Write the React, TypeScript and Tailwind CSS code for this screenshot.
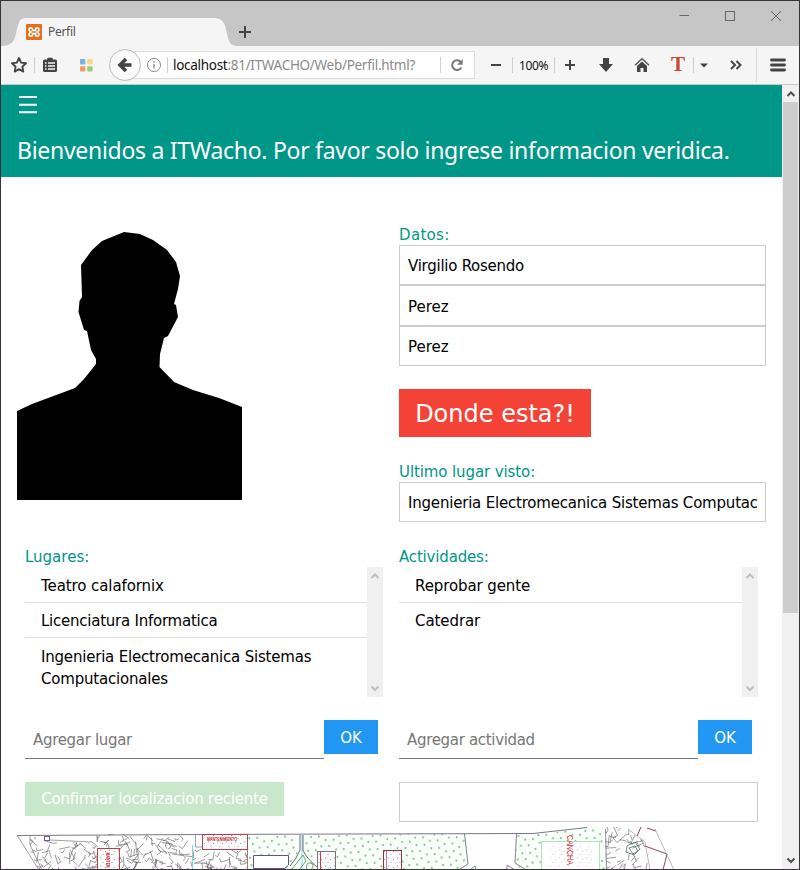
import type { ReactNode } from 'react';

const VERDANA = "font-['DejaVu_Sans',Verdana,sans-serif]";
const SEGOE = "font-['Noto_Sans','Segoe_UI',sans-serif]";

function Sep() {
  return <span className="h-4 w-px shrink-0 bg-[#cfcfcf]" />;
}

function Slot({ className, children }: { className: string; children: ReactNode }) {
  return <span className={`flex shrink-0 items-center justify-center ${className}`}>{children}</span>;
}

function TitleBar() {
  return (
    <div className="flex h-[45px] shrink-0 items-end bg-[#c6c6c6]">
      <svg width="25" height="28" viewBox="0 0 25 28" className="shrink-0">
        <path d="M0 28C10 28 13 24 15 16C17 6 18 0 25 0V28Z" fill="#f5f5f5" />
      </svg>
      <div className="flex h-7 w-[187px] items-center bg-[#f5f5f5]">
        <svg width="16" height="16" viewBox="0 0 16 16">
          <rect width="16" height="16" rx="1" fill="#e3701e" />
          <path d="M6.600 5.300Q6.200 3.700 4.600 3.700Q3 3.800 3 5.400Q3 6.600 4 7.200L5 8L4 8.800Q3 9.400 3 10.600Q3 12.200 4.600 12.300Q6.200 12.300 6.600 10.700V9.500H9.400V10.700Q9.800 12.300 11.400 12.300Q13 12.200 13 10.600Q13 9.400 12 8.800L11 8L12 7.200Q13 6.600 13 5.400Q13 3.800 11.400 3.700Q9.800 3.700 9.400 5.300V6.500H6.600Z" fill="none" stroke="#fff" strokeWidth="1.600" />
        </svg>
        <span className={`ml-[6px] text-[12px] tracking-[-0.300px] text-[#555] ${SEGOE}`}>Perfil</span>
      </div>
      <svg width="25" height="28" viewBox="0 0 25 28" className="shrink-0">
        <path d="M25 28C17 28 16 24 14 16C12 6 11 0 0 0V28Z" fill="#f5f5f5" />
      </svg>
      <svg width="17" height="28" viewBox="3 0 17 28" className="shrink-0">
        <path d="M4 14H16M10 8V20" stroke="#444" strokeWidth="2" />
      </svg>
      <svg width="120" height="45" viewBox="0 0 120 45" className="ml-auto shrink-0" fill="none" stroke="#666">
        <path d="M0.5 14.5H10" />
        <rect x="46.500" y="10.500" width="9" height="9" />
        <path d="M92 10L102 20M102 10L92 20" />
      </svg>
    </div>
  );
}

function ToolBar() {
  return (
    <div className="flex h-[39px] shrink-0 items-center border-b border-[#c9c9c9] bg-[#f5f5f5]">
      <Slot className="ml-[3px] w-[30px]">
        <svg width="18" height="18" viewBox="0 0 18 18">
          <path d="M9 2L11.1 6.6L16 7.2L12.4 10.6L13.3 15.6L9 13.2L4.7 15.6L5.6 10.6L2 7.2L6.9 6.6Z" fill="none" stroke="#444" strokeWidth="1.9" strokeLinejoin="round" />
        </svg>
      </Slot>
      <Sep />
      <Slot className="w-[30px]">
        <svg width="16" height="16" viewBox="0 0 16 16">
          <path d="M5.2 2.5V1.8Q5.2 0.8 6.2 0.8H9.8Q10.8 0.8 10.8 1.8V2.5H13.500Q15 2.5 15 4V13.500Q15 15 13.500 15H2.500Q1 15 1 13.500V4Q1 2.5 2.500 2.5Z" fill="#444" />
          <path d="M3 6H4.5M6 6H13M3 9H4.5M6 9H13M3 12H4.5M6 12H13" stroke="#f5f5f5" strokeWidth="1.5" />
        </svg>
      </Slot>
      <Slot className="w-[42px]">
        <svg width="13" height="13" viewBox="0 0 13 13">
          <rect width="5.4" height="5.4" rx="1" fill="#7ab3e3" />
          <rect x="7.2" width="5.4" height="5.4" rx="1" fill="#f6d980" />
          <rect y="7.2" width="5.4" height="5.4" rx="1" fill="#ef9f65" />
          <rect x="7.2" y="7.2" width="5.4" height="5.4" rx="1" fill="#98cd7c" />
        </svg>
      </Slot>
      <span className="z-10 ml-[2px] -mr-4 flex h-8 w-8 shrink-0 items-center justify-center rounded-full border border-[#bdbdbd] bg-[#fafafa]">
        <svg width="16" height="16" viewBox="0 0 16 16">
          <path d="M9 2L3 8L9 14M3.5 8H14.5" fill="none" stroke="#444" strokeWidth="3.6" />
        </svg>
      </span>
      <div className="flex h-7 w-[350px] shrink-0 items-center border border-[#dcdcdc] bg-white pl-5">
        <svg width="16" height="16" viewBox="0 0 16 16" className="shrink-0">
          <circle cx="8" cy="8" r="6.5" fill="none" stroke="#8a8a8a" />
          <path d="M8 7V11.5M8 4.3V5.7" stroke="#8a8a8a" strokeWidth="1.4" />
        </svg>
        <span className="ml-[5px]" />
        <Sep />
        <span className={`w-[272px] shrink-0 overflow-hidden pt-px pl-[5px] text-[13.500px] tracking-[-0.290px] whitespace-nowrap text-[#8b8b8b] ${SEGOE}`}>
          <span className="text-[#111]">localhost</span>:81/ITWACHO/Web/Perfil.html?
        </span>
        <Sep />
        <Slot className="w-[32px]">
          <svg width="14" height="14" viewBox="0 0 14 14">
            <path d="M11.3 9.6A4.9 4.9 0 1 1 10.6 3.7" fill="none" stroke="#777" strokeWidth="2" />
            <path d="M12.7 1V6.8H7Z" fill="#777" />
          </svg>
        </Slot>
      </div>
      <Slot className="ml-[5px] w-[32px]">
        <svg width="12" height="12" viewBox="0 0 12 12"><path d="M1 6H11" stroke="#444" strokeWidth="2" /></svg>
      </Slot>
      <Sep />
      <Slot className={`w-[41px] pt-px text-[12px] tracking-[-0.4px] text-[#111] ${SEGOE}`}>100%</Slot>
      <Sep />
      <Slot className="w-[30px]">
        <svg width="12" height="12" viewBox="0 0 12 12"><path d="M1 6H11M6 1V11" stroke="#444" strokeWidth="2" /></svg>
      </Slot>
      <Slot className="ml-[3px] w-9">
        <svg width="16" height="16" viewBox="0 0 16 16"><path d="M5 1H11V7H15L8 15L1 7H5Z" fill="#444" /></svg>
      </Slot>
      <Slot className="w-9">
        <svg width="16" height="16" viewBox="0 0 16 16">
          <path d="M1 8.3L8 1.8L15 8.3" fill="none" stroke="#555" strokeWidth="1.4" />
          <path d="M3 9L8 4.4L13 9V15H9.5V11H6.5V15H3Z" fill="#444" />
        </svg>
      </Slot>
      <Slot className="ml-[3px] w-[30px] font-['Liberation_Serif',serif] text-[21px] font-bold text-[#c8473c]">T</Slot>
      <Sep />
      <Slot className="w-5">
        <svg width="8" height="5" viewBox="0 0 8 5"><path d="M0 0.5H8L4 4.5Z" fill="#444" /></svg>
      </Slot>
      <Slot className="ml-[2px] w-10">
        <svg width="12" height="10" viewBox="0 0 12 10"><path d="M1 1L5 5L1 9M6.5 1L10.5 5L6.5 9" fill="none" stroke="#444" strokeWidth="2" /></svg>
      </Slot>
      <span className="h-[34px] w-px shrink-0 bg-[#dadada]" />
      <Slot className="w-[42px]">
        <svg width="16" height="14" viewBox="0 0 16 14"><path d="M1.5 2H14.5M1.5 7H14.5M1.5 12H14.5" stroke="#444" strokeWidth="2.8" strokeLinecap="round" /></svg>
      </Slot>
    </div>
  );
}

function Arrow({ up, color }: { up?: boolean; color: string }) {
  return (
    <svg width="16" height="17" viewBox="0 0 16 17" className="shrink-0">
      <path d={up ? 'M4.500 11L8 7.500L11.500 11' : 'M4.500 6.500L8 10L11.500 6.500'} fill="none" stroke={color} strokeWidth="2" />
    </svg>
  );
}

type Item = { text: string; className: string };

function ScrollList({ items, className }: { items: Item[]; className: string }) {
  return (
    <div className={`flex h-[130px] ${className}`}>
      <ul className="flex-1 overflow-hidden">
        {items.map((item) => (
          <li key={item.text} className={`px-4 leading-[22px] ${item.className}`}>
            {item.text}
          </li>
        ))}
      </ul>
      <div className="flex w-4 flex-col justify-between bg-[#f0f0f0]">
        <Arrow up color="#bfbfbf" />
        <Arrow color="#bfbfbf" />
      </div>
    </div>
  );
}

const PLACES: Item[] = [
  { text: 'Teatro calafornix', className: 'h-9 pt-2 border-b border-[#ddd] tracking-[-0.090px]' },
  { text: 'Licenciatura Informatica', className: 'h-[35px] pt-[7px] border-b border-[#ddd] tracking-[-0.240px]' },
  { text: 'Ingenieria Electromecanica Sistemas Computacionales', className: 'h-[57px] pt-2 tracking-[-0.200px]' },
];

const ACTIVITIES: Item[] = [
  { text: 'Reprobar gente', className: 'h-9 pt-2 border-b border-[#ddd] tracking-[-0.100px]' },
  { text: 'Catedrar', className: 'h-[35px] pt-[7px] tracking-[-0.080px]' },
];

const DATA = [
  { text: 'Virgilio Rosendo', className: 'h-10 pt-[9px] tracking-[-0.260px]' },
  { text: 'Perez', className: 'h-[41px] pt-[10px]' },
  { text: 'Perez', className: 'h-10 pt-[9px]' },
];

function Label({ children, className }: { children: ReactNode; className: string }) {
  return <div className={`h-[22px] leading-[22px] whitespace-nowrap text-[#009688] ${className}`}>{children}</div>;
}

function AddField({ text, className }: { text: string; className: string }) {
  return (
    <div className={`flex items-start ${className}`}>
      <div className="h-[39px] w-[299px] border-b border-[#757575] pt-[9px] pl-2 leading-[22px] tracking-[-0.320px] text-[#777]">{text}</div>
      <button className="h-[34px] w-[54px] bg-[#2196f3] pt-[2px] text-[15px] text-white">OK</button>
    </div>
  );
}

function randomizer(seed: number) {
  let s = seed;
  return () => {
    s = (s * 16807) % 2147483647;
    return s / 2147483647;
  };
}

function hatch(x0: number, x1: number, y0: number, count: number, seed: number) {
  const r = randomizer(seed);
  let d = '';
  for (let i = 0; i < count; i++) {
    const x = x0 + r() * (x1 - x0);
    const y = y0 + r() * (872 - y0);
    const a = r() * Math.PI;
    const l = 4 + r() * 8;
    const dx = Math.cos(a) * l;
    const dy = Math.sin(a) * l;
    d += `M${x.toFixed(1)} ${y.toFixed(1)}l${dx.toFixed(1)} ${dy.toFixed(1)}`;
    if (r() > 0.6) d += `l${(-dy * 0.5).toFixed(1)} ${(dx * 0.5).toFixed(1)}`;
  }
  return d;
}

function CampusMap() {
  return (
    <svg width="765" height="42" viewBox="17 827 765 42" className="mt-[5px] ml-4 shrink-0" fill="none">
      <defs>
        <pattern id="grass" width="15" height="14" patternUnits="userSpaceOnUse" patternTransform="rotate(12)">
          <rect width="15" height="14" fill="#fafffa" />
          <path d="M2 3h1.6M9.5 5h1.6M5 10h1.6M12.5 12h1.6" stroke="#3fae55" strokeWidth="1.6" />
        </pattern>
        <pattern id="speck" width="9" height="8" patternUnits="userSpaceOnUse">
          <rect width="9" height="8" fill="#fff" />
          <path d="M1 2h1.2M6 3.500h1M3.500 6.500h1" stroke="#999" />
        </pattern>
        <clipPath id="west"><path d="M30 836L32 836L50 841L90 843L97 847H120V870H38L30 850ZM97 834H192V870H120V847H97Z" /></clipPath>
        <clipPath id="mid"><path d="M193 849H247V870H193Z" /></clipPath>
        <clipPath id="east"><path d="M605 827H625L645 842L650 870H606Z" /></clipPath>
      </defs>
      <path d={hatch(28, 192, 833, 185, 77)} clipPath="url(#west)" stroke="#666" strokeWidth="0.65" />
      <path d={hatch(192, 248, 847, 42, 31)} clipPath="url(#mid)" stroke="#666" strokeWidth="0.65" />
      <path d={hatch(602, 650, 825, 62, 19)} clipPath="url(#east)" stroke="#666" strokeWidth="0.65" />
      <path d="M248 835H299V850L290 869H248Z" fill="url(#grass)" />
      <path d="M304 835L465 834L468 864L460 870H318L306 857Z" fill="url(#grass)" />
      <path d="M517 834H540L587 828H602L606 870H522L515 863Z" fill="url(#grass)" />
      <path d="M17 835.500L200 834.500L345 834L533 833.500L587 827.500" stroke="#6b6875" strokeWidth="0.9" />
      <path d="M17 835L39 870M30 836L30 845L42 870M97 835V842M50 840L92 842L98 847" stroke="#777" strokeWidth="0.7" />
      <rect x="44.500" y="836.500" width="5" height="4" fill="#fff" stroke="#77519a" />
      <path d="M192.500 845V870M302 834V870" stroke="#72dce0" strokeWidth="1" />
      <path d="M195.500 835V847H202" stroke="#777" strokeWidth="0.7" />
      <rect x="97.500" y="848.500" width="22" height="24" fill="url(#speck)" stroke="#c53c48" />
      <text transform="translate(105.500 852.500) rotate(90)" fill="#c9232d" fontSize="4.500" fontWeight="bold" fontFamily="Liberation Sans" textLength="15" lengthAdjust="spacingAndGlyphs">MANTEN</text>
      <rect x="202.500" y="834.500" width="45" height="15" fill="url(#speck)" stroke="#c53c48" />
      <text x="207" y="841" fill="#c9232d" fontSize="4.500" fontWeight="bold" fontFamily="Liberation Sans" textLength="30" lengthAdjust="spacingAndGlyphs">MANTENIMIENTO</text>
      <path d="M247.500 835V870" stroke="#8e5560" strokeWidth="0.8" />
      <path d="M253.500 855.500H288.500V865L284.500 868.500H253.500Z" fill="#fff" stroke="#655080" />
      <path d="M300 835V850Q297 858 290 866M303 835V850Q306 858 318 868" stroke="#6b6875" />
      <path d="M292 869L303 855L306 861L299 870M307 870Q305 862 311 863Q315 865 311 870" stroke="#4eae58" />
      <rect x="317.500" y="851.500" width="18" height="20" fill="url(#speck)" stroke="#777" />
      <path d="M320.500 852V870" stroke="#c53c48" />
      <rect x="383.500" y="850.500" width="18" height="21" fill="url(#speck)" stroke="#8e3540" />
      <path d="M386.500 851V870" stroke="#b36" strokeWidth="0.7" />
      <path d="M464.500 834L468 864L460 869M516.500 834L515 863L525 869M470 870L475 866L476 870M507 870V865L515 870" stroke="#5b6a68" strokeWidth="0.8" />
      <rect x="541.500" y="841.500" width="58" height="30" fill="#fff" stroke="#a9e8c5" />
      <rect x="550" y="845" width="45" height="22" fill="url(#speck)" opacity="0.5" />
      <text transform="translate(567 835) rotate(90)" fill="#c9232d" fontSize="9" fontFamily="Liberation Sans" textLength="30" lengthAdjust="spacingAndGlyphs">CANCHA</text>
      <path d="M605.500 829L606.500 870" stroke="#8b8b8b" />
      <path d="M628 829L645 842L650 870" stroke="#999" strokeWidth="0.7" />
      <path d="M627 846l8-4 5 7-6 6-8-3zM629 848l6-2 3 5-5 3z" stroke="#52706c" strokeWidth="0.8" />
      <path d="M641 827L637 836M647 828L656 831M645 846L667 854L663 870" stroke="#8d4a55" />
      <path d="M655 829L674 870" stroke="#aaa" strokeWidth="0.8" />
    </svg>
  );
}

function Page() {
  return (
    <div className={`flex w-[781px] shrink-0 flex-col overflow-hidden bg-white text-[15px] text-black ${VERDANA}`}>
      <header className={`h-[92px] shrink-0 bg-[#009688] pl-4 text-white ${SEGOE}`}>
        <svg width="20" height="20" viewBox="0 0 20 20" className="mt-[10px] ml-[2px]">
          <path d="M0 2H18M0 9.700H18M0 17.300H18" stroke="#fff" strokeWidth="2" />
        </svg>
        <h1 className="mt-[17px] text-[23px] leading-9 tracking-[-0.290px] whitespace-nowrap">Bienvenidos a ITWacho. Por favor solo ingrese informacion veridica.</h1>
      </header>

      <div className="flex h-[369px] shrink-0">
        <svg width="225" height="268" viewBox="17 232 225 268" className="mt-[55px] ml-4 shrink-0">
          <path d="M124 232L140 234L153 240L167 250L176 262L180 276L178 289L174 304L176 305L178 317L168 336L164 338L160 354L159.500 367L174 382L193 390L219 398L242 407V500H17V411L32 404L75 388L84 379L96 364V359L91 350L87 331L84 330L78.500 312L79.500 301L82 297L81 265L92 250L102 241Z" fill="#000" />
        </svg>
        <div className="mt-[46px] ml-[157px] flex w-[367px] flex-col items-start">
          <Label className="pt-px tracking-[0.330px]">Datos:</Label>
          {DATA.map((d, i) => (
            <div key={i} className={`w-full border border-[#ccc] px-2 leading-[22px] ${d.className}`}>{d.text}</div>
          ))}
          <button className="mt-[23px] h-12 w-48 bg-[#f44336] pt-px text-[24px] whitespace-nowrap text-white">Donde esta?!</button>
          <div className="mt-[23px] w-full">
            <Label className="pt-px tracking-[-0.100px]">Ultimo lugar visto:</Label>
            <div className="h-10 border border-[#ccc] px-2 py-[9px] leading-[22px]">
              <div className="h-[22px] overflow-hidden tracking-[-0.200px] whitespace-nowrap">Ingenieria Electromecanica Sistemas Computac</div>
            </div>
          </div>
        </div>
      </div>

      <div className="flex h-[151px] shrink-0 pl-6">
        <div className="w-[374px]">
          <Label className="">Lugares:</Label>
          <ScrollList className="-mt-px w-[358px]" items={PLACES} />
        </div>
        <div>
          <Label className="tracking-[-0.170px]">Actividades:</Label>
          <ScrollList className="-mt-px w-[359px]" items={ACTIVITIES} />
        </div>
      </div>

      <div className="mt-[23px] flex h-[62px] shrink-0 pl-6">
        <AddField text="Agregar lugar" className="w-[374px]" />
        <AddField text="Agregar actividad" className="w-[359px]" />
      </div>
      <div className="flex h-10 shrink-0 items-start pl-6">
        <div className="w-[374px]">
          <button className="h-[34px] w-[259px] bg-[#c9e7cb] pt-px tracking-[-0.190px] whitespace-nowrap text-white">Confirmar localizacion reciente</button>
        </div>
        <div className="h-10 w-[359px] border border-[#ccc]" />
      </div>
      <CampusMap />
    </div>
  );
}

export default function App() {
  return (
    <div className="flex h-[870px] w-[800px] flex-col overflow-hidden border border-[#383439] bg-white">
      <TitleBar />
      <ToolBar />
      <div className="flex min-h-0 flex-1">
        <Page />
        <div className="flex w-[17px] shrink-0 flex-col bg-[#f0f0f0] pl-px">
          <Arrow up color="#505050" />
          <div className="h-[511px] w-[15px] bg-[#cdcdcd]" />
          <div className="mt-auto"><Arrow color="#505050" /></div>
        </div>
      </div>
    </div>
  );
}
